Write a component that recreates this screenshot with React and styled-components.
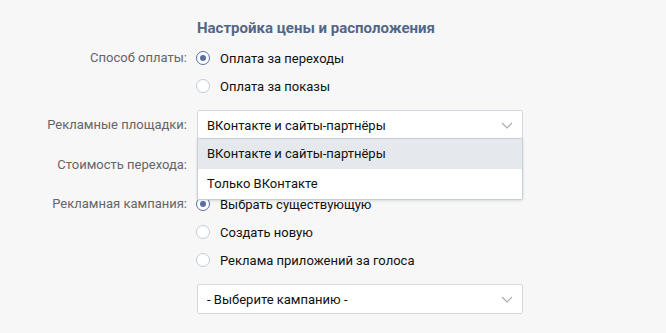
import React from "react";
import styled, { createGlobalStyle } from "styled-components";

const GlobalStyle = createGlobalStyle`
  html, body {
    margin: 0;
    padding: 0;
    background: #f7f7f7;
  }
  body {
    font-family: Roboto, "Open Sans", sans-serif;
    font-size: 13px;
    color: #000;
  }
`;

const Chevron = () => (
  <svg width="12" height="7" viewBox="0 0 12 7" fill="none">
    <path d="M1 1l5 5 5-5" stroke="#a3adb8" strokeWidth="1.2" />
  </svg>
);

const App = () => {
  return (
    <>
      <GlobalStyle />
      <Page>
        <Title>Настройка цены и расположения</Title>
        <Form>
          <Label $h={28}>Способ оплаты:</Label>
          <Options>
            <Radio checked>Оплата за переходы</Radio>
            <Radio>Оплата за показы</Radio>
          </Options>

          <Label $h={30}>Рекламные площадки:</Label>
          <SelectWrap>
            <Select>
              <span>ВКонтакте и сайты-партнёры</span>
              <Chevron />
            </Select>
            <Menu>
              <MenuItem $active>ВКонтакте и сайты-партнёры</MenuItem>
              <MenuItem>Только ВКонтакте</MenuItem>
            </Menu>
          </SelectWrap>

          <Label $h={30}>Стоимость перехода:</Label>
          <Hidden />

          <Label $h={28}>Рекламная кампания:</Label>
          <Options>
            <Radio checked>Выбрать существующую</Radio>
            <Radio>Создать новую</Radio>
            <Radio>Реклама приложений за голоса</Radio>
            <Select $top={10}>
              <span>- Выберите кампанию -</span>
              <Chevron />
            </Select>
          </Options>
        </Form>
      </Page>
    </>
  );
};

const Radio = ({ checked, children }) => (
  <RadioRow>
    <Circle $checked={checked} />
    {children}
  </RadioRow>
);

const Page = styled.div`
  padding: 18px 0 0 0;
`;

const Title = styled.div`
  margin-left: 197px;
  font-size: 15px;
  font-weight: 700;
  line-height: 20px;
  color: #526788;
  margin-bottom: 6px;
`;

const Form = styled.div`
  display: grid;
  grid-template-columns: 187px 326px;
  column-gap: 10px;
  row-gap: 10px;
  align-items: start;
`;

const Label = styled.div`
  text-align: right;
  color: #656565;
  line-height: ${(p) => p.$h}px;
  white-space: nowrap;
`;

const Options = styled.div`
  display: flex;
  flex-direction: column;
`;

const RadioRow = styled.div`
  display: flex;
  align-items: center;
  gap: 10px;
  height: 28px;
  color: #111;
`;

const Circle = styled.span`
  box-sizing: border-box;
  width: 14px;
  height: 14px;
  margin-left: -1px;
  border-radius: 50%;
  border: 1px solid ${(p) => (p.$checked ? "#5a6ea3" : "#c3cbd4")};
  background: #fff;
  display: flex;
  align-items: center;
  justify-content: center;
  &::after {
    content: "";
    display: ${(p) => (p.$checked ? "block" : "none")};
    width: 6px;
    height: 6px;
    border-radius: 50%;
    background: #5a6ea3;
  }
`;

const SelectWrap = styled.div`
  position: relative;
`;

const Select = styled.div`
  box-sizing: border-box;
  height: 30px;
  margin-top: ${(p) => p.$top || 0}px;
  padding: 0 9px 0 9px;
  display: flex;
  align-items: center;
  justify-content: space-between;
  background: #fff;
  border: 1px solid #d3d9de;
  border-radius: 2px;
  color: #111;
`;

const Menu = styled.div`
  position: absolute;
  top: 28px;
  left: 0;
  right: 0;
  z-index: 2;
  background: #fff;
  border: 1px solid #c5ced8;
  border-radius: 0 0 2px 2px;
  box-shadow: 0 1px 3px rgba(0, 0, 0, 0.12);
  color: #111;
`;

const MenuItem = styled.div`
  height: 30px;
  line-height: 30px;
  padding: 0 9px;
  background: ${(p) => (p.$active ? "#e5e9ee" : "#fff")};
`;

const Hidden = styled.div`
  height: 30px;
`;

export default App;
